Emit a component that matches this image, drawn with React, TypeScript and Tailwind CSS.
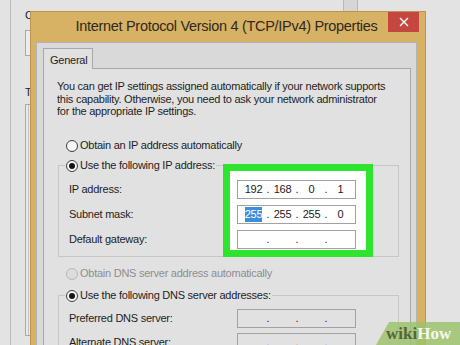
import React from "react"

const Radio = ({ checked = false, disabled = false }: { checked?: boolean; disabled?: boolean }) => (
  <span
    className={`w-[12px] h-[12px] rounded-full border flex items-center justify-center shrink-0 ${
      disabled ? "border-[#b8b8b8] bg-[#dcdcdc]" : "border-[#3e3e3e] bg-[#f6f6f6]"
    }`}
  >
    {checked && <span className="w-[6px] h-[6px] rounded-full bg-[#141414]" />}
  </span>
)

const IpField = ({ parts, white = false, selectFirst = false }: { parts: string[]; white?: boolean; selectFirst?: boolean }) => (
  <div
    className={`w-[119px] h-[19px] border border-[#a2a2a2] flex items-center pl-[3px] text-[11px] text-[#1c1c1c] ${
      white ? "bg-white" : ""
    }`}
  >
    {parts.map((p, i) => (
      <React.Fragment key={i}>
        {i > 0 && <span className="w-[4px] text-center">.</span>}
        <span className="w-[25px] text-center">
          {i === 0 && selectFirst ? <span className="bg-[#3a8fdc] text-white leading-[15px] inline-block">{p}</span> : p}
        </span>
      </React.Fragment>
    ))}
  </div>
)

export default function App() {
  return (
    <div className="relative w-[460px] h-[345px] overflow-hidden bg-[#e3e3e3] font-['Liberation_Sans',Arial,sans-serif] tracking-[-0.25px]">
      {/* window behind the dialog */}
      <div className="absolute inset-0 flex">
        <div className="ml-[10px] h-full border-l border-[#bcbcbc] pl-[14px] pt-[7px] w-[300px] text-[11px] text-[#222]">
          <div>Connect using:</div>
          <div className="mt-[6px] h-[26px] border border-[#a9a9a9] bg-[#ececec]" />
          <div className="mt-[28px]">This connection uses the following items:</div>
          <div className="mt-[4px] h-[232px] border border-[#a9a9a9] bg-[#e9e9e9] pl-[2px]">
            <div className="h-full border-l border-[#c4c4c4]" />
          </div>
        </div>
        <div className="absolute left-[343px] top-0 w-[15px] h-[12px] border-x border-[#b8b8b8] bg-[#d6d6d6]" />
      </div>

      {/* dialog */}
      <div className="absolute left-[30px] top-[11px] w-[396px] h-[380px] bg-[#d7b164] border border-[#bb9550] pl-[5px] pr-[8px] flex flex-col">
        <div className="relative h-[30px] flex items-center justify-center">
          <span className="text-[14.5px] tracking-[-0.3px] text-[#2f2a1c]">
            Internet Protocol Version 4 (TCP/IPv4) Properties
          </span>
          <div className="absolute right-[-2px] top-0 w-[31px] h-[20px] bg-[#c4463f] flex items-center justify-center">
            <svg width="10" height="10" viewBox="0 0 10 10">
              <path d="M1 1 L9 9 M9 1 L1 9" stroke="#fff" strokeWidth="1.4" />
            </svg>
          </div>
        </div>

        <div className="flex-1 bg-[#d9d9d9] border border-b-0 border-[#b3b3b3] pt-[5px] pl-[6px] flex flex-col">
          <div className="relative z-10 w-[50px] h-[21px] -mb-px border-t border-x border-[#a8a8a8] bg-[#e1e1e1] pl-[6px] pt-[3px] text-[11px] text-[#1e1e1e]">
            General
          </div>

          <div className="w-[368px] flex-1 bg-[#e1e1e1] border border-[#a8a8a8] pl-[13px] pt-[11px] text-[11px] text-[#1e1e1e]">
            <p className="leading-[12.5px]">
              You can get IP settings assigned automatically if your network supports
              <br />
              this capability. Otherwise, you need to ask your network administrator
              <br />
              for the appropriate IP settings.
            </p>

            <div className="mt-[21px] ml-[9px] h-[14px] flex items-center gap-[2px]">
              <Radio />
              <span>Obtain an IP address automatically</span>
            </div>

            <fieldset className="mt-[6px] ml-[1px] w-[341px] border border-[#c6c6c6] pl-[6px]">
              <legend className="px-[1px]">
                <span className="h-[14px] flex items-center gap-[2px]">
                  <Radio checked />
                  <span>Use the following IP address:</span>
                </span>
              </legend>
              <div className="flex">
                <div className="w-[158px] pl-[4px] pt-[7px] flex flex-col gap-[6px]">
                  <div className="h-[19px] flex items-center">IP address:</div>
                  <div className="h-[19px] flex items-center">Subnet mask:</div>
                  <div className="h-[19px] flex items-center">Default gateway:</div>
                </div>
                <div className="-mt-[9px] -mb-[1px] border-[7px] border-[#2fe42f] bg-white pt-[9px] pl-[7px] pr-[10px] pb-[1px] flex flex-col gap-[6px]">
                  <IpField white parts={["192", "168", "0", "1"]} />
                  <IpField white selectFirst parts={["255", "255", "255", "0"]} />
                  <IpField white parts={["", "", "", ""]} />
                </div>
              </div>
            </fieldset>

            <div className="mt-[10px] ml-[9px] h-[14px] flex items-center gap-[2px] text-[#8e8e8e]">
              <Radio disabled />
              <span>Obtain DNS server address automatically</span>
            </div>

            <fieldset className="mt-[8px] ml-[1px] w-[341px] border border-[#c6c6c6] pl-[6px] pb-[10px]">
              <legend className="px-[1px]">
                <span className="h-[14px] flex items-center gap-[2px]">
                  <Radio checked />
                  <span>Use the following DNS server addresses:</span>
                </span>
              </legend>
              <div className="flex">
                <div className="w-[172px] pl-[4px] pt-[6px] flex flex-col gap-[5px]">
                  <div className="h-[19px] flex items-center">Preferred DNS server:</div>
                  <div className="h-[19px] flex items-center">Alternate DNS server:</div>
                </div>
                <div className="pt-[6px] flex flex-col gap-[5px]">
                  <IpField parts={["", "", "", ""]} />
                  <IpField parts={["", "", "", ""]} />
                </div>
              </div>
            </fieldset>
          </div>
        </div>
      </div>

      {/* watermark */}
      <div className="absolute right-0 bottom-0 w-[84px] h-[23px] bg-[#9cc36c]/85 [clip-path:polygon(13px_0,100%_0,100%_100%,0_100%)] pl-[10px] flex items-center font-['Liberation_Serif',serif] font-bold text-[17px] tracking-[0px] leading-none">
        <span className="text-[#56653a]">wiki</span>
        <span className="text-[#f4f8ee]">How</span>
      </div>
    </div>
  )
}
